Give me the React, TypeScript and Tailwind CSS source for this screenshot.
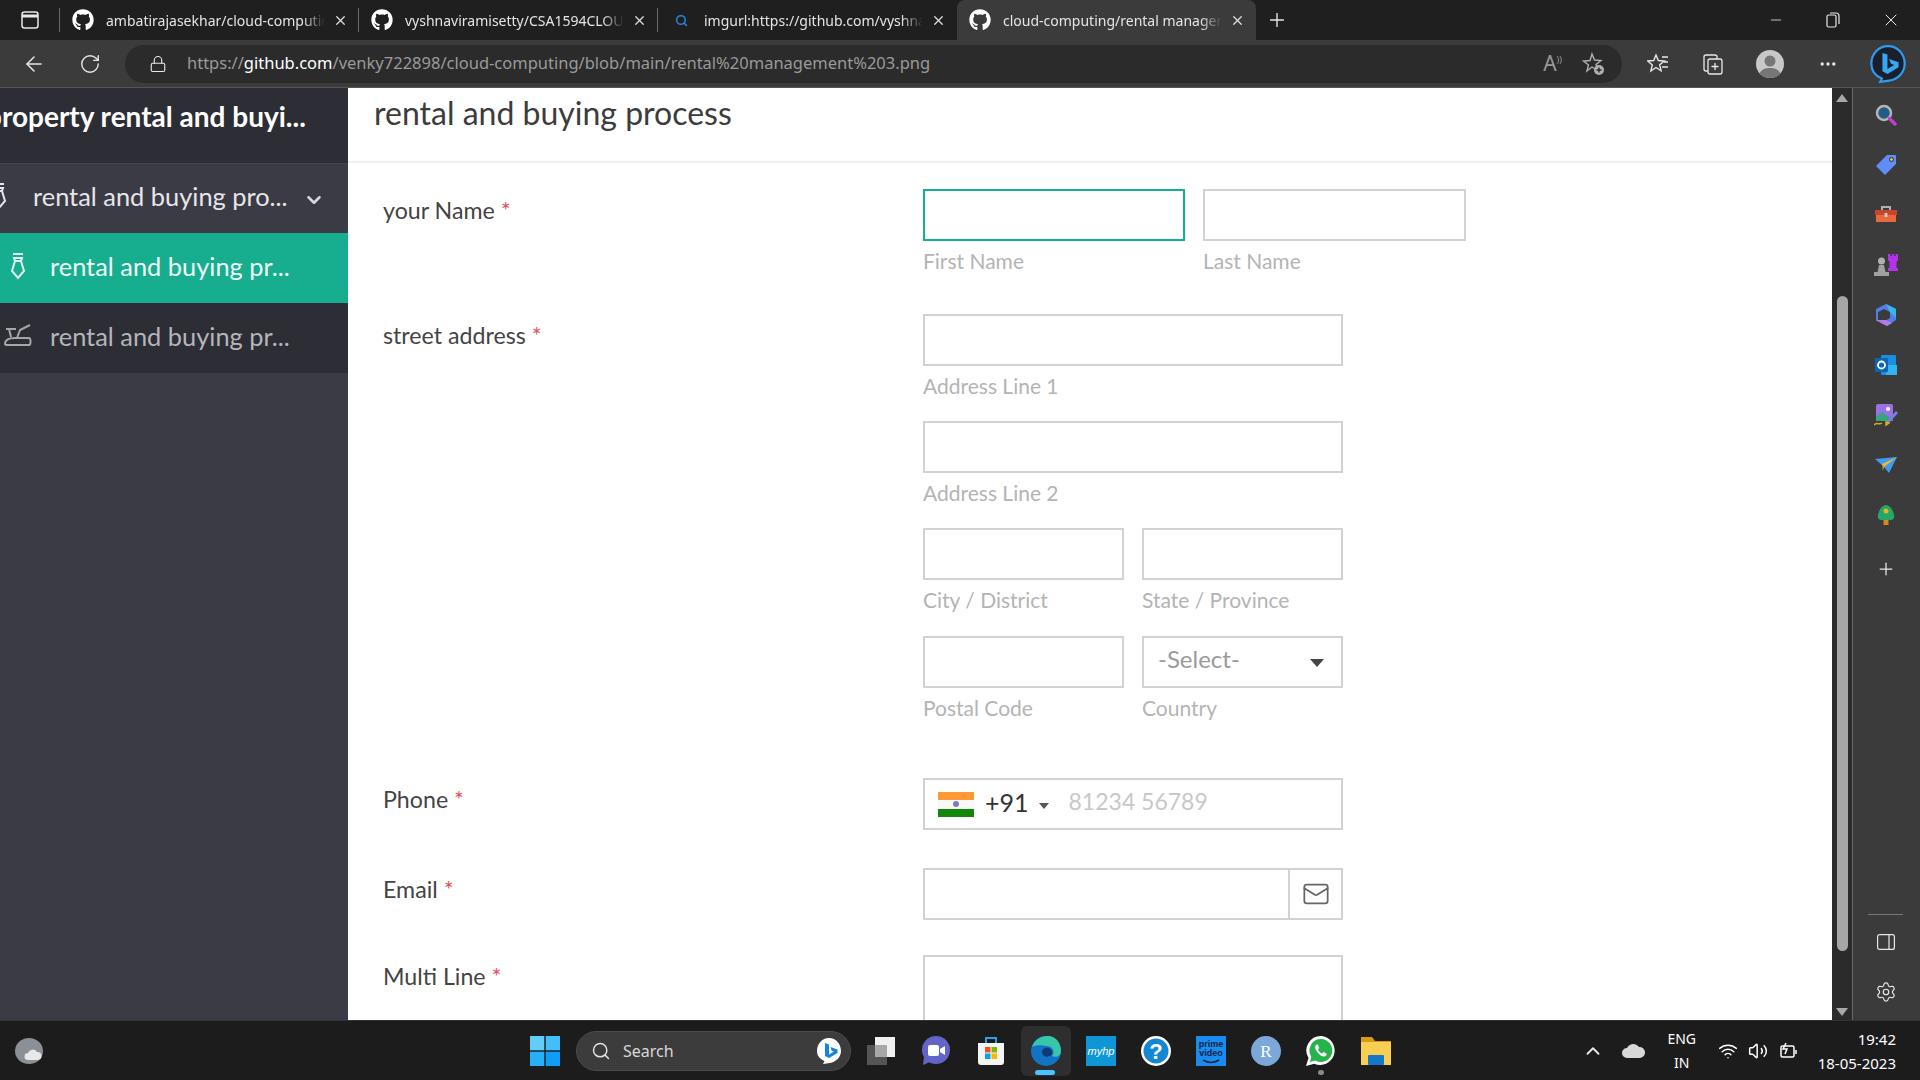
import React from 'react'
import { FaGithub } from 'react-icons/fa'
import {
  ArrowLeft,
  RotateCw,
  Lock,
  Search,
  Plus,
  X,
  Minus,
  MoreHorizontal,
  ChevronDown,
  ChevronUp,
  Settings,
  Wifi,
  Volume2,
  Mail,
} from 'lucide-react'

const lato = "font-['Lato','Open_Sans',sans-serif]"

const Tab = ({ icon, title, active }: { icon: React.ReactNode; title: string; active?: boolean }) => (
  <div className={active ? 'flex h-10 w-[299px] shrink-0 items-center bg-[#3b3b3b] pl-[11px] rounded-tr-lg rounded-tl-lg' : 'flex h-10 w-[298px] shrink-0 items-center pl-[11px]'}>
    <div className="flex w-6 shrink-0 justify-center text-white">{icon}</div>
    <div className="ml-[11px] w-[219px] overflow-hidden whitespace-nowrap text-[14px] text-[#e4e4e4] font-['Noto_Sans',sans-serif] [mask-image:linear-gradient(to_right,black_90%,transparent)]">{title}</div>
    <X size={15} className="ml-[8px] text-[#e0e0e0]" />
  </div>
)

const TabDivider = () => <div className="h-6 w-px shrink-0 bg-[#6a6a6a]" />

const Bing = ({ size = 36 }: { size?: number }) => (
  <svg width={size} height={size} viewBox="0 0 36 36" fill="none">
    <path d="M18 2c8.500 0 15 7 15 15.500 0 8-6 14.500-14 15.500l-8 1 1.500-3C6 28.500 3 23.500 3 17.500 3 9 9.500 2 18 2z" fill="#1a1f2b" stroke="#2d9bf0" strokeWidth="2" />
    <path d="M13 8l4.500 1.500v13l6-3.500-3-1.500-1.500-4 8.500 3v4.500L17.500 27 13 24.500z" fill="#35a8f5" />
  </svg>
)

const SideIcon = ({ children }: { children: React.ReactNode }) => (
  <div className="flex h-[50px] w-full items-center justify-center">
    <svg width="24" height="24" viewBox="0 0 24 24" fill="none">{children}</svg>
  </div>
)

const EdgeSidebar = () => (
  <div className="flex w-[68px] shrink-0 flex-col items-center border-l border-[#6a6a6a] bg-[#3b3b3b] pb-[5px] pr-[2px] pt-[2px]">
    <SideIcon>
      <circle cx="10" cy="10" r="7" fill="#1f5d86" stroke="#b5b5b5" strokeWidth="2.500" />
      <path d="M15.500 15.500L21 21" stroke="#c13fd0" strokeWidth="3.500" strokeLinecap="round" />
    </SideIcon>
    <SideIcon>
      <path d="M13 2h8a1 1 0 011 1v8L11 22 2 13z" fill="#5f8dfa" />
      <circle cx="17.500" cy="6.500" r="2" fill="#f4c20d" stroke="#1d2b55" />
    </SideIcon>
    <SideIcon>
      <path d="M8 7V4h8v3" stroke="#b0b0b0" strokeWidth="2" />
      <path d="M1 7h22v5H1z" fill="#c8442a" />
      <path d="M2 12h20v7H2z" fill="#e86a3a" />
      <rect x="10.500" y="10" width="3" height="4" fill="#c8c8c8" />
    </SideIcon>
    <SideIcon>
      <path d="M14 1h2.500v2H18V1h2v2h1.500V1H24v6l-1.500 2v6H24v3H14v-3h1.500V9L14 7z" fill="#b233ea" />
      <circle cx="7.500" cy="8" r="3.500" fill="#b0b0b0" />
      <path d="M5 12h5l1.500 7h-8zM0 19h15v4H0z" fill="#a0a0a0" />
    </SideIcon>
    <SideIcon>
      <path d="M12 1l10 5v11l-9 6-6-3 9-5V9l-6-3-6 3v10l-2-2V6z" fill="#4f7ee8" />
      <path d="M12 1l10 5v9l-6-6z" fill="#38b6e8" />
      <path d="M2 17l5 3 6 3 5-3-6-3z" fill="#b57be0" />
    </SideIcon>
    <SideIcon>
      <rect x="7" y="2" width="15" height="20" rx="1" fill="#1a8fdc" />
      <path d="M12 12h11v10H12z" fill="#33b4ee" />
      <rect x="1" y="5" width="13" height="14" rx="1" fill="#0a65b5" />
      <circle cx="7.500" cy="12" r="3.500" stroke="#fff" strokeWidth="1.800" />
    </SideIcon>
    <SideIcon>
      <rect x="2" y="1" width="17" height="17" rx="2" fill="#9b6fe8" />
      <path d="M2 14l6-5 11 8v1H2z" fill="#34a77a" />
      <circle cx="14" cy="6" r="2" fill="#fff" />
      <path d="M22 8l2 2-9 10-3-1z" fill="#7a7ae8" />
      <path d="M12 19l3 1-3 2zM0 22c3-3 5 0 8-2" stroke="#e3a61d" strokeWidth="1.500" />
    </SideIcon>
    <SideIcon>
      <path d="M1 6l22-2-8 16-5-6z" fill="#3d9bf0" />
      <path d="M23 4L8 11l2 3z" fill="#f5b82e" />
      <path d="M8 11l1 7 1-4z" fill="#e89b1a" />
    </SideIcon>
    <SideIcon>
      <path d="M12 2c4 0 7 5 8 10 1 3-1 5-3 5H7c-2 0-4-2-3-5 1-5 4-10 8-10z" fill="#22a86b" />
      <rect x="9.500" y="17" width="5" height="5" fill="#d98a12" />
      <circle cx="12" cy="8" r="2.500" fill="#f0b020" />
    </SideIcon>
    <div className="flex h-[58px] items-center justify-center">
      <Plus size={20} strokeWidth={1.500} className="text-[#e8e8e8]" />
    </div>
    <div className="mt-auto h-px w-[35px] bg-[#777777]" />
    <div className="flex h-[54px] items-center justify-center">
      <svg width="18" height="16" viewBox="0 0 18 16" fill="none" stroke="#e8e8e8" strokeWidth="1.200">
        <rect x="0.600" y="0.600" width="16.800" height="14.800" rx="2" />
        <path d="M12 1v14" />
      </svg>
    </div>
    <div className="flex h-[46px] items-center justify-center">
      <Settings size={22} strokeWidth={1.300} className="text-[#e8e8e8]" />
    </div>
  </div>
)

const NavLabel = ({ className, children }: { className: string; children: React.ReactNode }) => (
  <div className={`whitespace-nowrap ${className}`}>{children}</div>
)

const TieIcon = ({ color }: { color: string }) => (
  <svg width="16" height="28" viewBox="0 0 16 28" fill="none" stroke={color} strokeWidth="2">
    <path d="M3 2h10M4 6h8l-1 3H5zM5 9l-3 10 6 7 6-7-3-10" />
  </svg>
)

const Sidebar = () => (
  <div className={`flex w-[348px] shrink-0 flex-col overflow-hidden bg-[#3b3b45] ${lato}`}>
    <div className="flex h-[75px] shrink-0 items-start bg-[#2d2d36] pt-[7px]">
      <div className="-ml-[14px] whitespace-nowrap text-[28px] font-bold text-white">property rental and buyi...</div>
    </div>
    <div className="flex h-[70px] shrink-0 items-center border-t border-[#45454f] pb-[5px] text-[#e6e6ea]">
      <div className="-ml-[9px] w-[42px] shrink-0">
        <TieIcon color="#e6e6ea" />
      </div>
      <NavLabel className="text-[25.400px]">rental and buying pro...</NavLabel>
      <ChevronDown size={22} strokeWidth={2.800} className="ml-[15px] mt-[7px] shrink-0 text-[#d8d8dc]" />
    </div>
    <div className="flex h-[70px] shrink-0 items-center bg-[#16ae8e] pb-[4px] pl-[10px] text-[#effaf7]">
      <div className="w-[40px] shrink-0">
        <TieIcon color="#dff6f0" />
      </div>
      <NavLabel className="text-[25.400px]">rental and buying pr...</NavLabel>
    </div>
    <div className="flex h-[70px] shrink-0 items-center bg-[#2d2d36] pb-[4px] pl-[4px] text-[#b5b5ba]">
      <div className="w-[46px] shrink-0">
        <svg width="28" height="24" viewBox="0 0 28 24" fill="none" stroke="#a5a5aa" strokeWidth="2">
          <path d="M2 5h10M5 5l2 8M26 1l-10 5-3 8M1 20c0-5 5-6 10-6h14c2 0 2 7 0 7H4c-2 0-3 0-3-1z" />
        </svg>
      </div>
      <NavLabel className="text-[25.400px]">rental and buying pr...</NavLabel>
    </div>
  </div>
)

const Field = ({ hint, className, focus, children }: { hint?: string; className: string; focus?: boolean; children?: React.ReactNode }) => (
  <div className={className}>
    <div className={focus ? 'h-[52px] border-2 border-[#16ae8e] bg-white' : 'flex h-[52px] items-center border-2 border-[#d2d2d2] bg-white'}>{children}</div>
    {hint && <div className="h-[55px] text-[21px] leading-[40px] text-[#b4b4b4]">{hint}</div>}
  </div>
)

const Row = ({ label, className, children }: { label: string; className: string; children: React.ReactNode }) => (
  <div className={`flex ${className}`}>
    <div className="w-[575px] shrink-0 pl-[35px] text-[23.200px] leading-[42px] text-[#444444]">
      {label} <span className="text-[#e4515a]">*</span>
    </div>
    <div className="w-[544px]">{children}</div>
  </div>
)

const Form = () => (
  <div className={`min-w-0 flex-1 overflow-hidden bg-white ${lato}`}>
    <div className="flex h-[75px] items-start border-b-2 border-[#f1f1f1] pl-[26px] text-[32px] leading-[50px] text-[#3c3c3c]">rental and buying process</div>
    <div className="pt-[26px]">
      <Row label="your Name" className="mb-[18px]">
        <div className="flex gap-[18px]">
          <Field hint="First Name" className="w-[262px]" focus />
          <Field hint="Last Name" className="w-[263px]" />
        </div>
      </Row>
      <Row label="street address" className="mb-[35px]">
        <div className="w-[420px]">
          <Field hint="Address Line 1" className="w-full" />
          <Field hint="Address Line 2" className="w-full" />
          <div className="flex gap-[18px]">
            <Field hint="City / District" className="w-[201px]" />
            <Field hint="State / Province" className="w-[201px]" />
          </div>
          <div className="mt-[1px] flex gap-[18px]">
            <Field hint="Postal Code" className="w-[201px]" />
            <Field hint="Country" className="w-[201px]">
              <div className="flex w-full items-center justify-between pl-[14px] pr-[17px] text-[24px] text-[#9a9a9a]">
                <span className="-mt-[6px]">-Select-</span>
                <div className="mt-[2px] h-0 w-0 border-x-[7px] border-t-[8px] border-x-transparent border-t-[#444444]" />
              </div>
            </Field>
          </div>
        </div>
      </Row>
      <Row label="Phone" className="mb-[38px]">
        <Field className="w-[420px]">
          <div className="ml-[13px] flex h-[25px] w-9 shrink-0 flex-col">
            <div className="h-2 bg-[#ff9933]" />
            <div className="flex h-[9px] items-center justify-center bg-[#f8f8f8]">
              <div className="h-[6px] w-[6px] rounded-full bg-[#7a7ac0]" />
            </div>
            <div className="h-2 bg-[#138808]" />
          </div>
          <span className="-mt-[4px] ml-[11px] text-[25px] leading-none text-[#333333]">+91</span>
          <div className="ml-[10px] mt-[4px] h-0 w-0 border-x-[5px] border-t-[6px] border-x-transparent border-t-[#555555]" />
          <span className="-mt-[5px] ml-[20px] text-[23px] leading-none text-[#c8c8c8]">81234 56789</span>
        </Field>
      </Row>
      <Row label="Email" className="mb-[35px]">
        <Field className="w-[420px]">
          <div className="flex-1" />
          <div className="flex h-full w-[53px] items-center justify-center border-l-2 border-[#d2d2d2]">
            <Mail size={28} strokeWidth={1.500} className="text-[#666666]" />
          </div>
        </Field>
      </Row>
      <Row label="Multi Line" className="">
        <div className="h-[120px] w-[420px] border-2 border-[#d2d2d2]" />
      </Row>
    </div>
  </div>
)

const Scrollbar = () => (
  <div className="flex w-5 shrink-0 flex-col items-center bg-[#2b2b2b]">
    <div className="mt-[6px] h-0 w-0 border-x-[6px] border-b-[8px] border-x-transparent border-b-[#a8a8a8]" />
    <div className="mt-[194px] h-[655px] w-[11px] rounded-full bg-[#a6a6a6]" />
    <div className="mt-[57px] h-0 w-0 border-x-[6px] border-t-[8px] border-x-transparent border-t-[#a8a8a8]" />
  </div>
)

const TaskIcon = ({ children, active, dot }: { children: React.ReactNode; active?: boolean; dot?: boolean }) => (
  <div className="relative flex h-[50px] w-[55px] items-center justify-center">
    {active && <div className="absolute inset-y-0 left-[3px] right-[2px] rounded-md bg-[#2e2e2e]" />}
    <svg width="32" height="32" viewBox="0 0 32 32" fill="none" className="relative">{children}</svg>
    {active && <div className="absolute bottom-[1px] left-[17px] h-[5px] w-[20px] rounded-full bg-[#4cc2ff]" />}
    {dot && <div className="absolute bottom-[1px] left-[25px] h-[5px] w-[6px] rounded-full bg-[#8a8a8a]" />}
  </div>
)

const Taskbar = () => (
  <div className="flex h-[60px] shrink-0 items-center border-t border-[#333333] bg-[#1c1c1c] font-['Noto_Sans',sans-serif]">
    <div className="flex w-[530px] shrink-0 items-center pl-[14px]">
      <svg width="30" height="30" viewBox="0 0 30 30" fill="none">
        <ellipse cx="15" cy="15" rx="14" ry="13" fill="#8b9096" />
        <path d="M14 24a3.500 3.500 0 010-7 5 5 0 019-1 4 4 0 011 8z" fill="#e8e8e8" />
      </svg>
    </div>
    <svg width="30" height="30" viewBox="0 0 30 30" className="shrink-0">
      <path d="M0 0h14.300v14.300H0z" fill="#62cdf8" />
      <path d="M15.700 0H30v14.300H15.700z" fill="#45bdf8" />
      <path d="M0 15.700h14.300V30H0z" fill="#25b0f8" />
      <path d="M15.700 15.700H30V30H15.700z" fill="#0f9df5" />
    </svg>
    <div className="ml-4 flex h-10 w-[275px] shrink-0 items-center rounded-full border border-[#4a4a4a] bg-[#3c3c3c] pl-[14px] pr-[8px]">
      <Search size={20} strokeWidth={1.800} className="text-[#e0e0e0]" />
      <span className="ml-[12px] text-[16px] text-[#d8d8d8]">Search</span>
      <div className="ml-auto">
        <svg width="26" height="28" viewBox="0 0 26 28">
          <path d="M13 1c7 0 12 6 12 13 0 6-5 11-11 12l-7 1 1.500-3C4 22 1 19 1 14 1 7 6 1 13 1z" fill="#fff" />
          <path d="M9 6l4 1.500v10l5-3-2.500-1-1-3.500 7 2.500v3.500L13 21l-4-2z" fill="#1683e0" />
        </svg>
      </div>
    </div>
    <div className="ml-[2px] flex shrink-0 items-center">
      <TaskIcon>
        <rect x="2" y="10" width="20" height="20" fill="#555555" />
        <rect x="10" y="2" width="20" height="20" fill="#f0f0f0" />
        <rect x="10" y="10" width="12" height="12" fill="#a8a8a8" />
      </TaskIcon>
      <TaskIcon>
        <circle cx="16" cy="15" r="14" fill="#6264c8" />
        <path d="M4 22l-1 8 7-3z" fill="#6264c8" />
        <rect x="8" y="10" width="11" height="11" rx="2" fill="#fff" />
        <path d="M20 14l5-3v9l-5-3z" fill="#fff" />
      </TaskIcon>
      <TaskIcon>
        <path d="M11 8V3h10v5" stroke="#27a0e8" strokeWidth="2" />
        <path d="M3 8h26v19a3 3 0 01-3 3H6a3 3 0 01-3-3z" fill="#f4f4f4" />
        <rect x="10" y="12" width="5.500" height="5.500" fill="#f25022" />
        <rect x="16.500" y="12" width="5.500" height="5.500" fill="#7fba00" />
        <rect x="10" y="18.500" width="5.500" height="5.500" fill="#00a4ef" />
        <rect x="16.500" y="18.500" width="5.500" height="5.500" fill="#ffb900" />
      </TaskIcon>
      <TaskIcon active>
        <circle cx="16" cy="16" r="15" fill="#1273c4" />
        <path d="M2 12C5 3 13 1 18 1c8 0 13 7 13 15 0 5-5 7-9 5 3-3 2-9-5-10C11 10 5 10 2 12z" fill="#37c6a8" />
        <path d="M12 17c0-5 8-6 10-1 1 3-1 5-3 5-4 2-7-1-7-4z" fill="#0e3a78" />
      </TaskIcon>
      <TaskIcon>
        <rect x="1" y="1" width="30" height="30" fill="#0f96d6" />
        <text x="16" y="20" textAnchor="middle" fill="#ffffff" fontSize="11" fontStyle="italic" fontFamily="Liberation Sans">myhp</text>
      </TaskIcon>
      <TaskIcon>
        <circle cx="16" cy="16" r="15" fill="#ffffff" />
        <circle cx="16" cy="16" r="12.500" fill="#1487d4" />
        <text x="16" y="24" textAnchor="middle" fill="#ffffff" fontSize="22" fontWeight="bold" fontFamily="Liberation Sans">?</text>
      </TaskIcon>
      <TaskIcon>
        <rect x="1" y="1" width="30" height="30" fill="#1a8cf0" />
        <text x="16" y="12" textAnchor="middle" fill="#10233c" fontSize="9" fontWeight="bold" fontFamily="Liberation Sans">prime</text>
        <text x="16" y="21" textAnchor="middle" fill="#10233c" fontSize="9" fontWeight="bold" fontFamily="Liberation Sans">video</text>
        <path d="M8 25c5 3 11 3 16 0" stroke="#10233c" strokeWidth="1.500" />
      </TaskIcon>
      <TaskIcon>
        <circle cx="16" cy="16" r="15" fill="#7ba8d8" />
        <text x="16" y="22" textAnchor="middle" fill="#ffffff" fontSize="17" fontFamily="Liberation Serif">R</text>
      </TaskIcon>
      <TaskIcon dot>
        <path d="M16 1a14.500 14.500 0 00-12.500 22L1 31l8.200-2.300A14.500 14.500 0 1016 1z" fill="#ffffff" />
        <path d="M16 4a11.500 11.500 0 00-9.700 17.700L5 27l5.300-1.400A11.500 11.500 0 1016 4z" fill="#25b44a" />
        <path d="M11.500 9.500c-1.500 1-2 3 0 6.500s5 5.500 7.500 5.500c2 0 3-2 2.500-3l-3-1.500-1.500 1.500c-1.500-.5-3-2-4-4l1.200-1.500-1.200-3.500z" fill="#ffffff" />
      </TaskIcon>
      <TaskIcon>
        <path d="M1 2h11l3 4h16v6H1z" fill="#d89b12" />
        <path d="M1 7h30v23H1z" fill="#f8cf52" />
        <rect x="8" y="20" width="16" height="10" rx="1" fill="#1577c9" />
      </TaskIcon>
    </div>
    <div className="ml-auto flex items-center pr-[24px] text-white">
      <ChevronUp size={22} strokeWidth={2} className="text-[#e8e8e8]" />
      <svg width="24" height="20" viewBox="0 0 24 20" className="ml-[17px]">
        <path d="M6 17a5 5 0 010-10 7 7 0 0112-1 5.500 5.500 0 011 11z" fill="#d8d8d8" />
      </svg>
      <div className="ml-[17px] w-[40px] text-center text-[14px] leading-[24px]">
        <div>ENG</div>
        <div>IN</div>
      </div>
      <Wifi size={20} strokeWidth={1.800} className="ml-[16px]" />
      <Volume2 size={20} strokeWidth={1.800} className="ml-[10px]" />
      <svg width="20" height="18" viewBox="0 0 20 18" fill="none" stroke="#ffffff" strokeWidth="1.500" className="ml-[10px]">
        <rect x="3" y="4" width="13" height="11" rx="1.500" />
        <path d="M18 8v4M8 1l-3 6h4l-2 5" />
      </svg>
      <div className="ml-[20px] text-right text-[15px] leading-[24px]">
        <div>19:42</div>
        <div>18-05-2023</div>
      </div>
    </div>
  </div>
)

export default function App() {
  return (
    <div className="flex h-screen w-screen flex-col overflow-hidden bg-[#1f1f1f]">
      <div className="flex h-10 shrink-0 items-center">
        <div className="flex w-[59px] shrink-0 justify-center">
          <svg width="18" height="18" viewBox="0 0 18 18" fill="none" stroke="#e8e8e8" strokeWidth="1.500">
            <rect x="1" y="1" width="16" height="16" rx="2.500" />
            <path d="M1 5h16" strokeWidth="3" />
          </svg>
        </div>
        <TabDivider />
        <Tab icon={<FaGithub size={22} />} title="ambatirajasekhar/cloud-computing" />
        <TabDivider />
        <Tab icon={<FaGithub size={22} />} title="vyshnaviramisetty/CSA1594CLOUD" />
        <TabDivider />
        <Tab icon={<Search size={13} strokeWidth={3} className="text-[#2b7fd4]" />} title="imgurl:https://github.com/vyshnavirami" />
        <div className="w-px shrink-0" />
        <Tab icon={<FaGithub size={22} />} title="cloud-computing/rental management" active />
        <Plus size={22} strokeWidth={1.500} className="ml-[10px] text-[#e8e8e8]" />
        <div className="ml-auto flex items-center pr-[19px] text-[#e8e8e8]">
          <Minus size={16} strokeWidth={1.200} />
          <svg width="14" height="16" viewBox="0 0 14 16" fill="none" stroke="#e8e8e8" strokeWidth="1.200" className="ml-[42px]">
            <rect x="1" y="3" width="9" height="12" rx="1.500" />
            <path d="M4 1h6a3 3 0 013 3v8" />
          </svg>
          <X size={20} strokeWidth={1.200} className="ml-[41px]" />
        </div>
      </div>
      <div className="flex h-12 shrink-0 items-center border-b border-[#555555] bg-[#3b3b3b]">
        <ArrowLeft size={24} strokeWidth={1.500} className="ml-[22px] text-[#e8e8e8]" />
        <RotateCw size={22} strokeWidth={1.500} className="ml-[33px] text-[#e8e8e8]" />
        <div className="ml-[24px] flex h-[38px] w-[1497px] shrink-0 items-center rounded-full bg-[#2b2b2b] pl-[24px] pr-[16px]">
          <Lock size={18} strokeWidth={1.500} className="text-[#e8e8e8]" />
          <div className="ml-[20px] whitespace-nowrap text-[16.500px] text-[#9a9a9a] font-['Noto_Sans',sans-serif]">
            https://<span className="text-white">github.com</span>/venky722898/cloud-computing/blob/main/rental%20management%203.png
          </div>
          <div className="ml-auto flex items-center text-[#9a9a9a]">
            <span className="text-[21px] leading-none">A</span>
            <span className="-mt-2 text-[9px]">))</span>
            <svg width="24" height="24" viewBox="0 0 24 24" fill="none" stroke="#b0b0b0" strokeWidth="1.400" className="ml-[20px]">
              <path d="M10 2l2.500 6 6.500.5-5 4 1.500 6-5.500-3.500L5 19l1.500-6-5-4 6.500-.5z" />
              <circle cx="17" cy="18" r="5" fill="#b0b0b0" stroke="none" />
              <path d="M17 15.500v5M14.500 18h5" stroke="#2b2b2b" />
            </svg>
          </div>
        </div>
        <svg width="22" height="22" viewBox="0 0 22 22" fill="none" stroke="#e8e8e8" strokeWidth="1.400" className="ml-[25px]">
          <path d="M9 2l2.300 5.500 6 .5-4.600 3.800 1.400 6L9 14.500 3.900 18l1.400-6L.7 8l6-.5zM15 4h6M17 9h4M15 14h6" />
        </svg>
        <svg width="24" height="24" viewBox="0 0 24 24" fill="none" stroke="#e8e8e8" strokeWidth="1.300" className="ml-[32px]">
          <rect x="7" y="7" width="14" height="15" rx="2" />
          <path d="M14 11v7M10.500 14.500h7M7 19H5a2 2 0 01-2-2V5a2 2 0 012-2h9a2 2 0 012 2v2" />
        </svg>
        <div className="ml-[31px] flex h-7 w-7 items-end justify-center overflow-hidden rounded-full bg-[#c8c8c8]">
          <svg width="28" height="28" viewBox="0 0 28 28">
            <circle cx="14" cy="11" r="5.500" fill="#777777" />
            <path d="M3 28c0-8 5-10 11-10s11 2 11 10z" fill="#777777" />
          </svg>
        </div>
        <MoreHorizontal size={20} className="ml-[34px] text-[#e8e8e8]" />
        <div className="ml-[30px]">
          <Bing size={40} />
        </div>
      </div>
      <div className="flex min-h-0 flex-1">
        <Sidebar />
        <Form />
        <Scrollbar />
        <EdgeSidebar />
      </div>
      <Taskbar />
    </div>
  )
}
